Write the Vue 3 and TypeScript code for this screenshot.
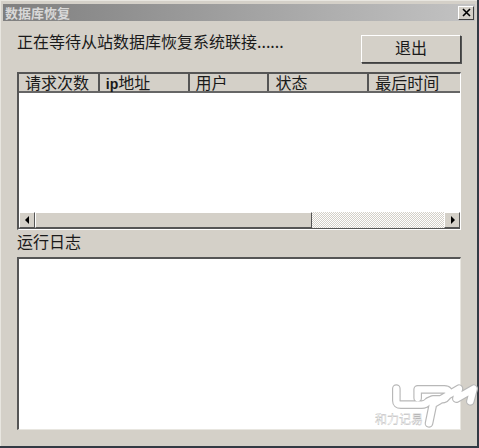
<script setup lang="ts">
const columns = [
  { label: '请求次数', width: 81 },
  { label: 'ip地址', width: 90, bold: true },
  { label: '用户', width: 80 },
  { label: '状态', width: 100 },
  { label: '最后时间', width: 91 },
];
const logoPath =
  'M112 62V98Q112 110 126 110H188Q200 110 208 100L222 94H246Q262 94 268 78Q272 64 256 64H176V90M210 166L222 108L300 62L292 92L344 62L334 100';
</script>

<template>
  <div class="screen">
    <div class="window">
      <div class="titlebar">
        <span class="title">数据库恢复</span>
        <button class="close">
          <svg width="9" height="9" viewBox="0 0 9 9"><path d="M1 1l7 7M8 1L1 8" stroke="#000" stroke-width="1.6" fill="none" /></svg>
        </button>
      </div>
      <div class="body">
        <div class="top">
          <span class="status">正在等待从站数据库恢复系统联接......</span>
          <button class="exit"><span>退出</span></button>
        </div>
        <div class="list">
          <div class="head">
            <div v-for="c in columns" :key="c.label" class="col" :style="{ width: c.width + 'px' }">
              <template v-if="c.bold"><b>ip</b>地址</template>
              <template v-else>{{ c.label }}</template>
            </div>
          </div>
          <div class="rows"></div>
          <div class="scrollbar">
            <button class="arrow">
              <svg width="5" height="8" viewBox="0 0 5 8"><path d="M4 0v8L0 4z" fill="#000" /></svg>
            </button>
            <div class="thumb"></div>
            <div class="track"></div>
            <button class="arrow">
              <svg width="5" height="8" viewBox="0 0 5 8"><path d="M1 0v8l4-4z" fill="#000" /></svg>
            </button>
          </div>
        </div>
        <div class="log-label">运行日志</div>
        <div class="log"></div>
      </div>
    </div>
    <div class="mark">
      <svg width="120" height="80" viewBox="0 0 360 240">
        <g fill="none" stroke-linejoin="round" stroke-linecap="round">
          <path :d="logoPath" stroke="#b8b8b8" stroke-width="26" />
          <path :d="logoPath" stroke="#fff" stroke-width="19" />
        </g>
      </svg>
      <span class="mark-text">和力记易</span>
    </div>
  </div>
</template>

<style>
html, body { margin: 0; background: #d4d0c8; }
</style>

<style scoped>
.screen {
  position: relative;
  width: 479px;
  height: 448px;
  overflow: hidden;
  background: #333a44;
  font-family: "Noto Sans CJK SC", sans-serif;
  color: #1a1a1a;
}
.window {
  box-sizing: border-box;
  width: 477px;
  height: 446px;
  padding-top: 3px;
  background: #d4d0c8;
  border-top: 1px solid #e8e6e0;
  border-left: 1px solid #e8e6e0;
}
.titlebar {
  height: 17px;
  margin: 0 2px;
  padding: 0 1px 0 2px;
  display: flex;
  align-items: center;
  justify-content: space-between;
  background: linear-gradient(90deg, #7f7f7f, #c3c3c3);
}
.title {
  font-size: 13px;
  font-weight: 700;
  line-height: 17px;
  color: #d8d8d8;
}
.close {
  box-sizing: border-box;
  width: 16px;
  height: 14px;
  padding: 0;
  display: flex;
  align-items: center;
  justify-content: center;
  background: #d4d0c8;
  border: 1px solid;
  border-color: #fff #404040 #404040 #fff;
}
.body {
  padding-left: 16px;
}
.top {
  width: 444px;
  height: 51px;
  display: flex;
  justify-content: space-between;
  align-items: flex-start;
}
.status {
  margin-top: 10px;
  font-size: 16px;
  line-height: 20px;
}
.exit {
  box-sizing: border-box;
  width: 100px;
  height: 28px;
  margin-top: 14px;
  padding: 0 0 5px;
  font: inherit;
  font-size: 16px;
  line-height: 20px;
  color: #1a1a1a;
  background: #d4d0c8;
  border: 1px solid;
  border-color: #fff #404040 #404040 #fff;
  box-shadow: 1px 1px 0 #555;
}
.list {
  box-sizing: border-box;
  width: 444px;
  height: 158px;
  display: flex;
  flex-direction: column;
  background: #fff;
  border: 1px solid;
  border-width: 2px 1px 1px 2px;
  border-color: #555 #fff #fff #555;
}
.head {
  box-sizing: border-box;
  height: 19px;
  flex: none;
  display: flex;
  background: #d4d0c8;
  border-bottom: 2px solid #666;
}
.col {
  box-sizing: border-box;
  padding-left: 6px;
  font-size: 16px;
  line-height: 17px;
  white-space: nowrap;
  border-right: 2px solid #555;
}
.col:last-child { border-right: 0; }
.col b { font-family: "Liberation Sans", sans-serif; font-size: 14px; }
.rows { flex: 1; }
.scrollbar {
  height: 16px;
  flex: none;
  display: flex;
  border-bottom: 1px solid #555;
}
.arrow {
  box-sizing: border-box;
  width: 16px;
  height: 16px;
  padding: 0;
  flex: none;
  display: flex;
  align-items: center;
  justify-content: center;
  background: #d4d0c8;
  border: 1px solid;
  border-color: #fff #555 #555 #fff;
}
.thumb {
  box-sizing: border-box;
  width: 277px;
  background: #d4d0c8;
  border: 1px solid;
  border-color: #fff #555 #555 #fff;
}
.track {
  flex: 1;
  background-color: #fff;
  background-image: conic-gradient(#d4d0c8 25%, #fff 0 50%, #d4d0c8 0 75%, #fff 0);
  background-size: 2px 2px;
}
.log-label {
  box-sizing: border-box;
  height: 27px;
  padding-top: 1px;
  font-size: 16px;
  line-height: 20px;
}
.log {
  box-sizing: border-box;
  width: 444px;
  height: 173px;
  background: #fff;
  border: 1px solid;
  border-width: 2px 1px 1px 2px;
  border-color: #555 #e8e6e0 #e8e6e0 #555;
}
.mark {
  position: absolute;
  left: 359px;
  top: 368px;
  width: 120px;
  height: 80px;
}
.mark-text {
  position: absolute;
  left: 16px;
  top: 44px;
  font-size: 12px;
  line-height: 14px;
  color: #fff;
  -webkit-text-stroke: 0.3px #aaa;
}
</style>
